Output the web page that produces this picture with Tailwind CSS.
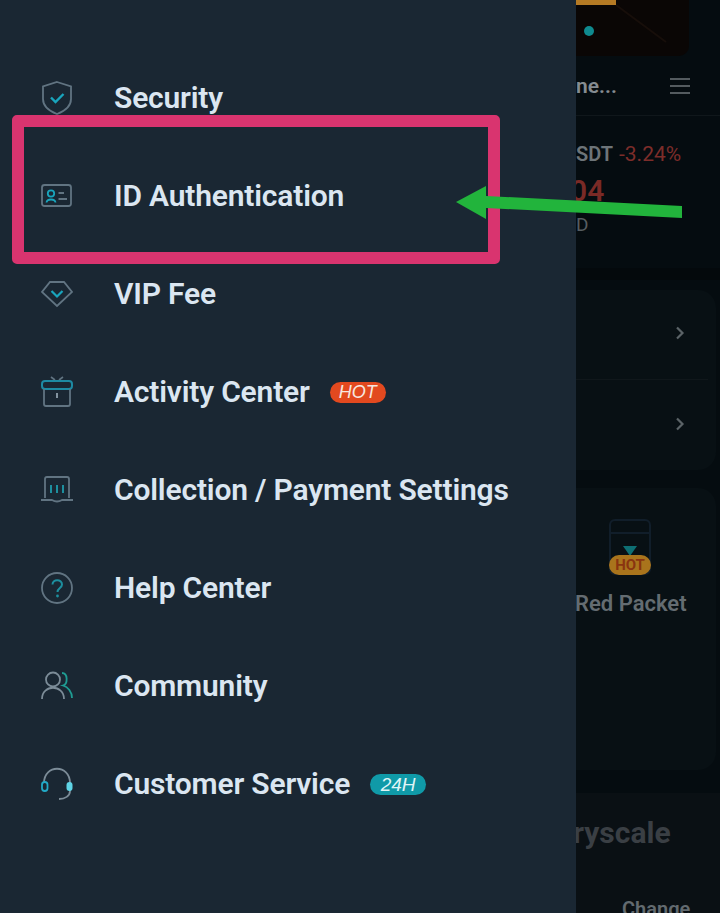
<!DOCTYPE html>
<html lang="en">
<head>
    <meta charset="UTF-8">
    <meta name="viewport" content="width=device-width, initial-scale=1.0">
    <title>Menu</title>
    <script src="https://cdn.jsdelivr.net/npm/@tailwindcss/browser@4"></script>
</head>
<body class="bg-[#050c10] font-['Roboto',sans-serif] antialiased">
    <div class="relative flex h-[913px] w-[720px] overflow-hidden">
        <!-- drawer -->
        <aside class="z-10 flex h-full w-[576px] shrink-0 flex-col bg-[#1a2733] pt-[49px] text-[30px] font-semibold leading-[98px] tracking-[-0.18px] text-[#dbe6f1]">
            <div class="flex h-[98px] items-center">
                <svg class="ml-[40px] h-[36px] w-[34px]" viewBox="0 0 34 36" fill="none"><path d="M17 2 L31 6.5 V19 C31 26 25 31 17 34 C9 31 3 26 3 19 V6.5 Z" stroke="#617482" stroke-width="1.8"/><path d="M11 17.5 L15.5 22 L23.5 14" stroke="#19a5bd" stroke-width="2.4"/></svg>
                <span class="ml-[40px]">Security</span>
            </div>
            <div class="flex h-[98px] items-center">
                <svg class="ml-[40px] h-[26px] w-[34px]" viewBox="0 0 34 26" fill="none"><rect x="2" y="2" width="29" height="21" rx="2.5" stroke="#617482" stroke-width="1.8"/><circle cx="11" cy="10.5" r="3.2" stroke="#19a5bd" stroke-width="1.8"/><path d="M6.5 19.5 C7 15.5 15 15.5 15.5 19.5" stroke="#19a5bd" stroke-width="1.8"/><path d="M18.5 10 H24 M18.5 16 H27" stroke="#617482" stroke-width="1.8"/></svg>
                <span class="ml-[40px]">ID Authentication</span>
            </div>
            <div class="flex h-[98px] items-center">
                <svg class="ml-[40px] h-[30px] w-[34px]" viewBox="0 0 34 30" fill="none"><path d="M10 3 H24 L32 13 L17 27 L2 13 Z" stroke="#617482" stroke-width="1.8"/><path d="M11.5 12 L17 17.5 L22.5 12" stroke="#19a5bd" stroke-width="2.2"/></svg>
                <span class="ml-[40px]">VIP Fee</span>
            </div>
            <div class="flex h-[98px] items-center">
                <svg class="ml-[40px] h-[32px] w-[34px]" viewBox="0 0 34 32" fill="none"><path d="M11 1 L15 4 M23 1 L19 4" stroke="#617482" stroke-width="1.6"/><rect x="2" y="5" width="30" height="8" rx="3" stroke="#1d8aa3" stroke-width="2"/><path d="M4 13 V28 Q4 30 6 30 H28 Q30 30 30 28 V13" stroke="#617482" stroke-width="1.8"/><path d="M17 17 V22" stroke="#8fa0ac" stroke-width="1.8"/></svg>
                <span class="ml-[40px]">Activity Center</span>
                <span class="ml-[20px] flex h-[21px] w-[56px] items-center justify-center rounded-full bg-[#e2491f] font-['Liberation_Sans',sans-serif] text-[18px] font-normal italic leading-none tracking-normal text-[#f7e6df]">HOT</span>
            </div>
            <div class="flex h-[98px] items-center">
                <svg class="ml-[40px] h-[30px] w-[34px]" viewBox="0 0 34 30" fill="none"><path d="M5 23 V4 Q5 2 7 2 H27 Q29 2 29 4 V23" stroke="#617482" stroke-width="1.8"/><path d="M1 25 H12 Q17 28 22 25 H33" stroke="#617482" stroke-width="1.8"/><path d="M11 10 V18 M17 10 V18 M23 10 V18" stroke="#1d8f9f" stroke-width="2"/></svg>
                <span class="ml-[40px]">Collection / Payment Settings</span>
            </div>
            <div class="flex h-[98px] items-center">
                <svg class="ml-[40px] h-[34px] w-[34px]" viewBox="0 0 34 34" fill="none"><circle cx="17" cy="17" r="15" stroke="#617482" stroke-width="1.8"/><path d="M12.5 13.5 C12.5 7.5 22 8 22 13.5 C22 17 17.5 17 17.5 21" stroke="#1d8f9f" stroke-width="2"/><circle cx="17.5" cy="25" r="1.4" fill="#1d8f9f"/></svg>
                <span class="ml-[40px]">Help Center</span>
            </div>
            <div class="flex h-[98px] items-center">
                <svg class="ml-[40px] h-[32px] w-[34px]" viewBox="0 0 34 32" fill="none"><circle cx="13" cy="9.5" r="7" stroke="#7c8c98" stroke-width="1.8"/><path d="M2 29 C2 14 24 14 24 29" stroke="#7c8c98" stroke-width="1.8"/><path d="M22 3 C28 3 28 14 23 15.5 C28 17 32 22 32 28" stroke="#1f9c93" stroke-width="1.8"/></svg>
                <span class="ml-[40px]">Community</span>
            </div>
            <div class="flex h-[98px] items-center">
                <svg class="ml-[40px] h-[36px] w-[34px]" viewBox="0 0 34 36" fill="none"><path d="M4 17 C4 -2 30 -2 30 17 V25 C30 30 25 33 19 33" stroke="#7c8c98" stroke-width="1.8"/><rect x="2" y="16" width="5.5" height="9" rx="2.7" stroke="#22a9c6" stroke-width="1.8"/><rect x="26.5" y="16" width="6" height="9" rx="3" fill="#5fd4e6"/></svg>
                <span class="ml-[40px]">Customer Service</span>
                <span class="ml-[20px] flex h-[21px] w-[56px] items-center justify-center rounded-full bg-[#109aa8] font-['Liberation_Sans',sans-serif] text-[19px] font-normal italic leading-none tracking-normal text-[#dff4f6]">24H</span>
            </div>
        </aside>

        <!-- page dimmed behind the drawer -->
        <main class="flex h-full min-w-0 flex-1 flex-col font-semibold text-[#7b8389]">
            <div class="relative h-[56px] w-[113px] shrink-0 overflow-hidden rounded-br-[10px] bg-[#0a0605]">
                <div class="h-[5px] w-[40px] bg-[#b57a24]"></div>
                <svg class="absolute left-0 top-0 h-[56px] w-[113px]" viewBox="0 0 113 56" fill="none"><path d="M40 5 L90 42" stroke="#170e0a" stroke-width="2"/></svg>
                <div class="absolute left-[8px] top-[26px] size-[10px] rounded-full bg-[#0f8a8f]"></div>
            </div>
            <div class="flex h-[60px] shrink-0 items-center justify-between border-b border-[#10171b] pr-[30px] text-[21px]">
                <span class="mt-[2px] text-[#858c91]">ne...</span>
                <svg class="h-[18px] w-[20px]" viewBox="0 0 20 18" fill="none"><path d="M0 2 H20 M0 9 H20 M0 16 H20" stroke="#6f767a" stroke-width="1.6"/></svg>
            </div>
            <div class="mt-[25px] flex h-[26px] shrink-0 items-center text-[20px] leading-none text-[#6d7478]">SDT<span class="ml-[6px] text-[21px] font-normal text-[#7d2d2a]">-3.24%</span></div>
            <div class="-ml-[6px] h-[40px] shrink-0 pt-[4px] text-[30px] leading-[40px] text-[#7a2a26]">04</div>
            <div class="mt-[8px] h-[20px] shrink-0 text-[19px] font-normal leading-[20px] text-[#565d61]">D</div>
            <div class="mt-[33px] h-[12px] shrink-0 bg-[#04090c]"></div>
            <div class="mt-[10px] flex h-[180px] w-[140px] shrink-0 flex-col rounded-r-[18px] bg-[#081014]">
                <div class="mr-[8px] flex h-[90px] items-center justify-end border-b border-[#10171b] pb-[3px] pr-[23px]">
                    <svg class="h-[14px] w-[10px]" viewBox="0 0 10 14" fill="none"><path d="M2 1.5 L7.5 7 L2 12.5" stroke="#5b6367" stroke-width="2.2"/></svg>
                </div>
                <div class="mr-[8px] flex h-[90px] items-center justify-end pb-[3px] pr-[23px]">
                    <svg class="h-[14px] w-[10px]" viewBox="0 0 10 14" fill="none"><path d="M2 1.5 L7.5 7 L2 12.5" stroke="#5b6367" stroke-width="2.2"/></svg>
                </div>
            </div>
            <div class="mt-[18px] flex h-[282px] w-[140px] shrink-0 flex-col rounded-r-[18px] bg-[#081014] pt-[31px]">
                <div class="relative ml-[33px] h-[56px] w-[42px] rounded-[6px] border-2 border-[#111e2a]">
                    <div class="absolute left-0 right-0 top-[11px] h-[2px] bg-[#111e2a]"></div>
                    <div class="absolute left-[12px] top-[25px] h-0 w-0 border-x-[7px] border-t-[10px] border-x-transparent border-t-[#0e6f73]"></div>
                    <div class="absolute -left-[2px] bottom-[-2px] flex h-[20px] w-[42px] items-center justify-center rounded-full bg-[#a9741c] text-[15px] font-bold leading-none text-[#8a3410]">HOT</div>
                </div>
                <div class="-ml-[1px] mt-[15px] text-[22px] leading-[28px] text-[#646c71]">Red Packet</div>
            </div>
            <div class="mt-[23px] flex min-h-0 flex-1 flex-col bg-[#0a1014]">
                <div class="-ml-[3px] mt-[22px] text-[30px] font-bold leading-[36px] text-[#3a3f44]">ryscale</div>
                <div class="mt-[46px] pl-[46px] text-[20px] leading-[24px] text-[#626a6f]">Change</div>
            </div>
        </main>

        <!-- annotation overlay -->
        <div class="absolute left-[12px] top-[115px] z-20 h-[149px] w-[488px] rounded-[5px] border-[12px] border-[#d9346f]"></div>
        <svg class="absolute left-0 top-0 z-20 h-[913px] w-[720px]" viewBox="0 0 720 913" fill="none"><polygon points="456,202 486,186 486,196 682,206 682,218 486,208 486,219" fill="#22b43c"/></svg>
    </div>
</body>
</html>
